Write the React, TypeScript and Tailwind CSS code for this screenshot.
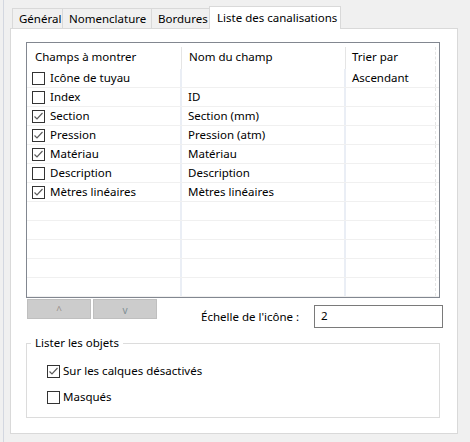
import type { ReactNode } from "react";

type Row = { checked: boolean; label: string; field: string; sort: string };

const rows: Row[] = [
  { checked: false, label: "Icône de tuyau", field: "", sort: "Ascendant" },
  { checked: false, label: "Index", field: "ID", sort: "" },
  { checked: true, label: "Section", field: "Section (mm)", sort: "" },
  { checked: true, label: "Pression", field: "Pression (atm)", sort: "" },
  { checked: true, label: "Matériau", field: "Matériau", sort: "" },
  { checked: false, label: "Description", field: "Description", sort: "" },
  { checked: true, label: "Mètres linéaires", field: "Mètres linéaires", sort: "" },
];

const emptyRows = 5;

function CheckBox({ checked }: { checked: boolean }) {
  return (
    <span className="w-[13px] h-[13px] shrink-0 border border-[#333333] bg-white flex items-center justify-center">
      {checked && (
        <svg width="11" height="11" viewBox="0 0 11 11" fill="none">
          <path d="M1.5 5.5 L4 8 L9.5 2" stroke="#5c5c5c" strokeWidth="1.2" />
        </svg>
      )}
    </span>
  );
}

function Tab({ children, active, width }: { children: ReactNode; active?: boolean; width: string }) {
  if (active) {
    return (
      <div
        className={`${width} h-[23px] -mb-px relative z-10 bg-white border border-b-0 border-[#d9d9d9] pl-[7px] pt-[2px] leading-[18px] whitespace-nowrap`}
      >
        {children}
      </div>
    );
  }
  return (
    <div
      className={`${width} h-[20px] border-t border-l border-[#d9d9d9] bg-[#f0f0f0] pl-[6px] leading-[19px] whitespace-nowrap`}
    >
      {children}
    </div>
  );
}

export default function App() {
  return (
    <div
      className="w-[470px] h-[442px] bg-[#f0f0f0] flex text-[11.5px] text-black overflow-hidden"
      style={{ fontFamily: '"Segoe UI", "Noto Sans", sans-serif' }}
    >
      <div className="w-px ml-[3px] bg-[#d3d7e0]" />
      <div className="flex flex-col pl-[6px] pt-[6px]">
        {/* tabs */}
        <div className="flex items-end h-[22px] pl-[2px]">
          <Tab width="w-[50px]">Général</Tab>
          <Tab width="w-[89px]">Nomenclature</Tab>
          <Tab width="w-[58px]">Bordures</Tab>
          <Tab active width="w-[132px]">
            Liste des canalisations
          </Tab>
        </div>

        {/* pane */}
        <div className="w-[448px] h-[406px] bg-white border border-[#d9d9d9] pl-[15px] pt-[13px]">
          {/* list */}
          <div className="w-[414px] h-[256px] border border-[#828790] overflow-hidden flex flex-col">
            <div className="flex h-[26px] shrink-0 pt-[4px]">
              <div className="w-[155px] border-r border-[#e5e5e5] pl-[8px] leading-[20px]">
                Champs à montrer
              </div>
              <div className="w-[164px] border-r border-[#e5e5e5] pl-[7px] leading-[20px]">
                Nom du champ
              </div>
              <div className="w-[90px] border-r border-dashed border-[#e5e5e5] pl-[6px] leading-[20px]">
                Trier par
              </div>
            </div>
            {rows.map((r) => (
              <div key={r.label} className="flex h-[19px] shrink-0 border-b border-[#f0f0f0]">
                <div className="w-[155px] border-r-2 border-[#eaeef5] pl-[5px] flex items-center gap-[5px]">
                  <CheckBox checked={r.checked} />
                  <span className="leading-[18px]">{r.label}</span>
                </div>
                <div className="w-[164px] border-r-2 border-[#eaeef5] pl-[6px] leading-[18px]">
                  {r.field}
                </div>
                <div className="w-[90px] border-r border-dashed border-[#e5e5e5] pl-[6px] leading-[18px]">
                  {r.sort}
                </div>
              </div>
            ))}
            {Array.from({ length: emptyRows }).map((_, i) => (
              <div key={i} className="flex h-[19px] shrink-0 border-b border-[#f0f0f0]">
                <div className="w-[155px] border-r-2 border-[#eaeef5]" />
                <div className="w-[164px] border-r-2 border-[#eaeef5]" />
                <div className="w-[90px] border-r border-dashed border-[#e5e5e5]" />
              </div>
            ))}
          </div>

          {/* buttons + scale */}
          <div className="flex items-start mt-[1px]">
            <div className="flex gap-[2px] ml-[1px]">
              <button className="w-[64px] h-[20px] bg-[#cccccc] border border-[#bfbfbf] text-[#9a8f8a] text-[10px] leading-[20px] flex justify-center">
                ^
              </button>
              <button className="w-[64px] h-[20px] bg-[#cccccc] border border-[#bfbfbf] text-[#7f8f94] text-[10px] leading-[20px] flex justify-center">
                v
              </button>
            </div>
            <span className="ml-[44px] w-[113px] mt-[10px] leading-[16px] whitespace-nowrap">
              Échelle de l'icône :
            </span>
            <div className="mt-[6px] w-[129px] h-[23px] border border-[#7a7a7a] pl-[6px] leading-[20px]">
              2
            </div>
          </div>

          {/* group */}
          <div className="mt-[15px] w-[414px] h-[75px] border border-[#dcdcdc] relative">
            <span className="absolute left-[4px] -top-[10px] bg-white px-[4px] leading-[18px]">
              Lister les objets
            </span>
            <div className="pl-[20px] pt-[20px] flex flex-col gap-[12px]">
              <label className="flex items-center gap-[3px]">
                <CheckBox checked />
                <span className="leading-[14px]">Sur les calques désactivés</span>
              </label>
              <label className="flex items-center gap-[3px]">
                <CheckBox checked={false} />
                <span className="leading-[14px]">Masqués</span>
              </label>
            </div>
          </div>
        </div>
      </div>
    </div>
  );
}
